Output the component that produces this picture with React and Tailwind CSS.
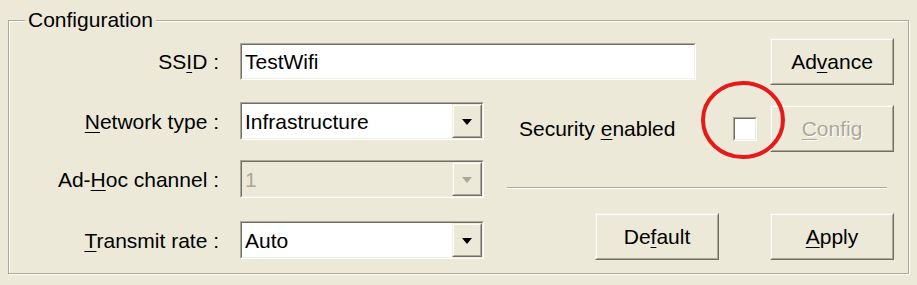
import React from "react";

function Sunken({ className = "", inner = "", children }) {
  return (
    <div className={`border border-t-[#aca899] border-l-[#aca899] border-b-white border-r-white ${className}`}>
      <div className={`h-full w-full border border-t-[#716f64] border-l-[#716f64] border-b-[#f1efe2] border-r-[#f1efe2] ${inner}`}>
        {children}
      </div>
    </div>
  );
}

function Raised({ className = "", inner = "", children }) {
  return (
    <div className={`border border-t-[#f1efe2] border-l-[#f1efe2] border-b-[#716f64] border-r-[#716f64] bg-[#ece9d8] ${className}`}>
      <div className={`h-full w-full border border-t-white border-l-white border-b-[#aca899] border-r-[#aca899] ${inner}`}>
        {children}
      </div>
    </div>
  );
}

function Button({ children, disabled = false }) {
  return (
    <Raised className="w-[124px] h-[47px] shrink-0" inner="flex items-center justify-center">
      <span className={disabled ? "text-[#aca899] [text-shadow:1px_1px_0_#ffffff]" : "text-black"}>{children}</span>
    </Raised>
  );
}

function Combo({ value, disabled = false }) {
  return (
    <Sunken className="w-[244px] h-[38px] shrink-0" inner={`flex ${disabled ? "bg-[#ece9d8]" : "bg-white"}`}>
      <div className={`flex-1 flex items-center pl-[3px] ${disabled ? "text-[#aca899]" : "text-black"}`}>{value}</div>
      <Raised className="w-[30px] h-full" inner="flex items-center justify-center">
        <div
          className={`w-0 h-0 border-l-[5px] border-r-[5px] border-t-[6px] border-l-transparent border-r-transparent mt-[1px] ${
            disabled ? "border-t-[#aca899]" : "border-t-black"
          }`}
        />
      </Raised>
    </Sunken>
  );
}

function U({ children }) {
  return <span className="underline underline-offset-[3px] decoration-1">{children}</span>;
}

function Label({ children }) {
  return <div className="w-[210px] shrink-0 text-right text-black whitespace-nowrap">{children}</div>;
}

export default function App() {
  return (
    <div className="relative w-[917px] h-[285px] bg-[#ece9d8] pt-[20px] pl-[8px] font-['Liberation_Sans',Arial,sans-serif] text-[21px] leading-none overflow-hidden">
      <div className="relative w-[901px] h-[254px] border border-[#aca899] shadow-[inset_1px_1px_0_#ffffff,1px_1px_0_#ffffff]">
        <span className="absolute left-[16px] -top-[12px] px-[3px] bg-[#ece9d8] text-black leading-[22px]">Configuration</span>

        <div className="flex flex-col pt-[17px] pr-[14px]">
          {/* Row 1 */}
          <div className="flex items-center h-[47px]">
            <Label>
              SS<U>I</U>D :
            </Label>
            <Sunken className="ml-[21px] w-[456px] h-[37px]" inner="bg-white flex items-center pl-[3px] text-black">
              TestWifi
            </Sunken>
            <div className="ml-auto">
              <Button>
                Ad<U>v</U>ance
              </Button>
            </div>
          </div>

          {/* Lower area */}
          <div className="flex">
            {/* Left column */}
            <div className="flex flex-col">
              <div className="flex items-center mt-[17px]">
                <Label>
                  <U>N</U>etwork type :
                </Label>
                <div className="ml-[21px]">
                  <Combo value="Infrastructure" />
                </div>
              </div>
              <div className="flex items-center mt-[20px]">
                <Label>
                  Ad-<U>H</U>oc channel :
                </Label>
                <div className="ml-[21px]">
                  <Combo value="1" disabled />
                </div>
              </div>
              <div className="flex items-center mt-[23px]">
                <Label>
                  <U>T</U>ransmit rate :
                </Label>
                <div className="ml-[21px]">
                  <Combo value="Auto" />
                </div>
              </div>
            </div>

            {/* Right column */}
            <div className="flex flex-col flex-1 ml-[23px]">
              <div className="flex items-center h-[47px] mt-[20px]">
                <span className="pl-[12px] text-black">
                  Security <U>e</U>nabled
                </span>
                <Sunken className="ml-auto mr-[13px] w-[24px] h-[24px]" inner="bg-white" />
                <Button disabled>
                  <U>C</U>onfig
                </Button>
              </div>
              <div className="mt-[35px] mr-[7px] h-[2px] border-t border-t-[#aca899] border-b border-b-white" />
              <div className="flex justify-end gap-[51px] mt-[24px]">
                <Button>
                  De<U>f</U>ault
                </Button>
                <Button>
                  <U>A</U>pply
                </Button>
              </div>
            </div>
          </div>
        </div>
      </div>

      <svg className="absolute left-[699px] top-[79px]" width="88" height="82" viewBox="0 0 88 82">
        <ellipse cx="44" cy="41" rx="40" ry="37" fill="none" stroke="#e31b1b" strokeWidth="4" />
      </svg>
    </div>
  );
}
